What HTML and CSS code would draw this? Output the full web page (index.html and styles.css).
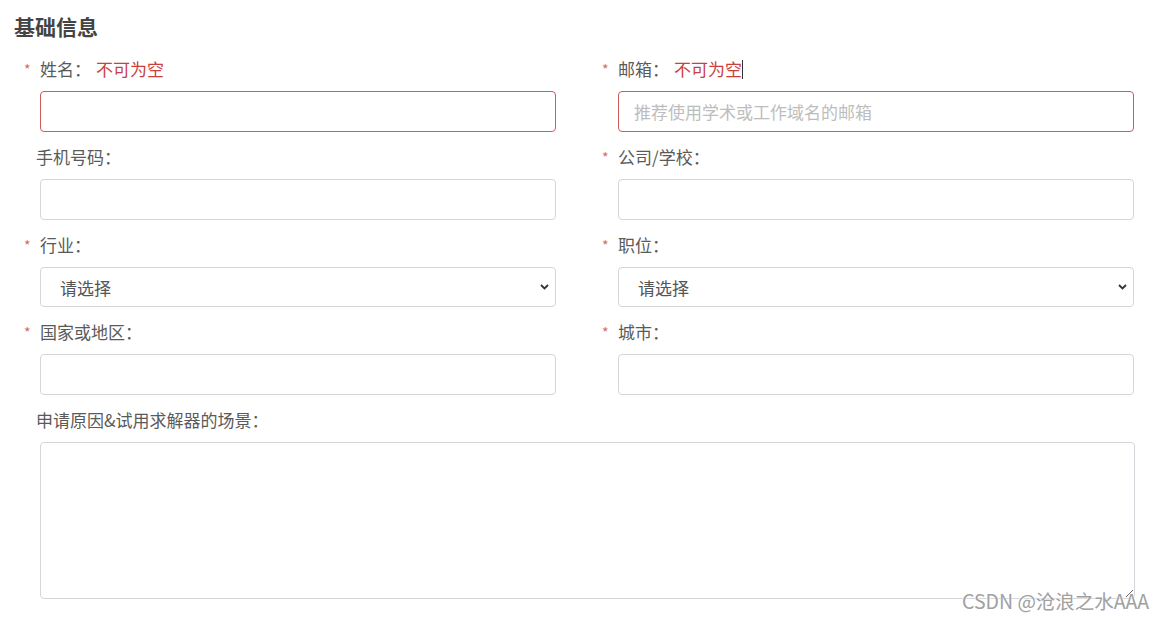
FILE: index.html
```html
<!DOCTYPE html>
<html lang="zh">
<head>
<meta charset="utf-8">
<title>基础信息</title>
<link rel="stylesheet" href="styles.css">
</head>
<body>
<div class="page">
  <h2 class="title">基础信息</h2>
  <form class="grid">
    <div class="field">
      <div class="label req">姓名：<span class="err">不可为空</span></div>
      <input class="ctl invalid" type="text">
    </div>
    <div class="field">
      <div class="label req">邮箱：<span class="err">不可为空</span><span class="caret"></span></div>
      <input class="ctl invalid" type="text" placeholder="推荐使用学术或工作域名的邮箱">
    </div>
    <div class="field">
      <div class="label plain">手机号码：</div>
      <input class="ctl" type="text">
    </div>
    <div class="field">
      <div class="label req">公司/学校：</div>
      <input class="ctl" type="text">
    </div>
    <div class="field">
      <div class="label req">行业：</div>
      <div class="selwrap">
        <select class="ctl sel"><option>请选择</option></select>
        <svg class="chev" width="9" height="6" viewBox="0 0 9 6"><path d="M1 1 L4.5 4.5 L8 1" fill="none" stroke="#333" stroke-width="1.8"/></svg>
      </div>
    </div>
    <div class="field">
      <div class="label req">职位：</div>
      <div class="selwrap">
        <select class="ctl sel"><option>请选择</option></select>
        <svg class="chev" width="9" height="6" viewBox="0 0 9 6"><path d="M1 1 L4.5 4.5 L8 1" fill="none" stroke="#333" stroke-width="1.8"/></svg>
      </div>
    </div>
    <div class="field">
      <div class="label req">国家或地区：</div>
      <input class="ctl" type="text">
    </div>
    <div class="field">
      <div class="label req">城市：</div>
      <input class="ctl" type="text">
    </div>
    <div class="field wide">
      <div class="label plain">申请原因&amp;试用求解器的场景：</div>
      <textarea class="ctl area"></textarea>
    </div>
  </form>
  <div class="watermark">CSDN @沧浪之水AAA</div>
</div>
</body>
</html>
```
FILE: styles.css
```css
html, body {
  margin: 0;
  padding: 0;
  background: #fff;
}
body {
  font-family: "Noto Sans CJK SC", "Noto Sans", "Liberation Sans", sans-serif;
  color: #555;
}
.page {
  position: relative;
  width: 1167px;
  height: 620px;
  overflow: hidden;
}
.title {
  margin: 0;
  padding: 12px 14px 0 14px;
  height: 42px;
  font-size: 21px;
  line-height: 28px;
  font-weight: 700;
  color: #444;
}
.grid {
  display: grid;
  grid-template-columns: 531px 531px;
  column-gap: 47px;
  padding: 4px 0 0 24px;
  row-gap: 14px;
}
.field {
  display: flex;
  flex-direction: column;
}
.wide {
  grid-column: 1 / 3;
}
.label {
  height: 22px;
  line-height: 22px;
  font-size: 17px;
  color: #5a5a5a;
  margin-bottom: 11px;
  white-space: nowrap;
}
.label.req::before {
  content: "*";
  color: #d76a66;
  font-size: 14px;
  display: inline-block;
  width: 16px;
  vertical-align: top;
}
.label.plain {
  padding-left: 12px;
}
.err {
  color: #c9403c;
  margin-left: 5px;
}
.caret {
  display: inline-block;
  width: 1px;
  height: 19px;
  background: #333;
  vertical-align: -3px;
}
.ctl {
  box-sizing: border-box;
  margin: 0 0 0 16px;
  width: 516px;
  height: 41px;
  border: 1px solid #d3d6db;
  border-radius: 4px;
  background: #fff;
  font-family: inherit;
  font-size: 17px;
  color: #555;
  padding: 0 15px;
  outline: none;
}
.ctl::placeholder {
  color: #bdbdbd;
}
.invalid {
  border-color: #cf5c5c;
}
.selwrap {
  position: relative;
}
.sel {
  -webkit-appearance: none;
  appearance: none;
  height: 40px;
  padding-left: 19px;
  color: #555;
}
.chev {
  position: absolute;
  left: 516px;
  top: 17px;
}
.area {
  width: 1095px;
  height: 157px;
  padding: 8px 15px;
  resize: both;
}
.watermark {
  position: absolute;
  left: 962px;
  top: 588px;
  font-size: 19.5px;
  line-height: 26px;
  color: #a0a0a0;
  text-shadow: 0 0 2px #fff, 0 0 2px #fff;
  font-family: "Noto Sans CJK SC", "Noto Sans", sans-serif;
  white-space: nowrap;
}
```
